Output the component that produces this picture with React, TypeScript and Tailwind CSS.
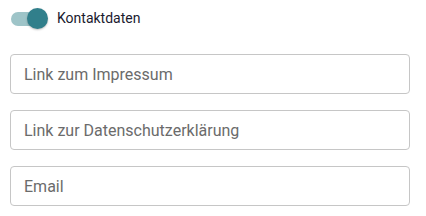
import { useState } from 'react';

const fields = ['Link zum Impressum', 'Link zur Datenschutzerklärung', 'Email'];

export default function App() {
  const [on, setOn] = useState(true);

  return (
    <main className="w-[426px] h-[216px] bg-white px-[10px] pt-[8px] font-['Roboto',sans-serif]">
      <label className="flex items-center h-[21px] cursor-pointer">
        <button
          type="button"
          onClick={() => setOn(!on)}
          className="relative w-[38px] h-[21px] flex items-center"
        >
          <span className="ml-[1px] w-[34px] h-[14px] rounded-full bg-[#9ec4c8]" />
          <span
            className={`absolute top-0 w-[21px] h-[21px] rounded-full bg-[#317f8b] shadow-[0_1px_2px_rgba(0,0,0,0.25)] ${
              on ? 'left-[17px]' : 'left-0'
            }`}
          />
        </button>
        <span className="ml-[9px] text-[14px] text-[#1a1a2e]">Kontaktdaten</span>
      </label>

      <div className="flex flex-col gap-[16px] mt-[25px]">
        {fields.map((f) => (
          <input
            key={f}
            placeholder={f}
            className="w-[400px] h-[40px] rounded-[4px] border border-[#c6c6c6] px-[13px] text-[16px] text-[#333] placeholder:text-[#6b6b6b] outline-none"
          />
        ))}
      </div>
    </main>
  );
}
